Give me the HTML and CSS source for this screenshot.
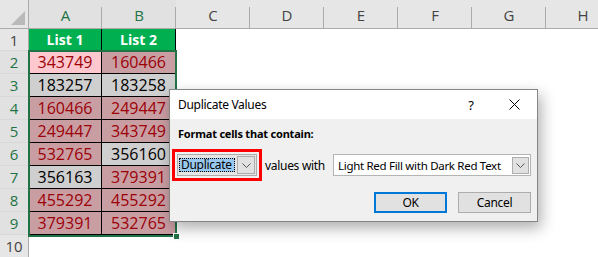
FILE: index.html
```html
<!DOCTYPE html>
<html lang="en">
<head>
    <meta charset="UTF-8">
    <meta name="viewport" content="width=device-width, initial-scale=1.0">
    <title>Duplicate Values</title>
    <link rel="stylesheet" href="styles.css">
</head>
<body>
    <div class="sheet">
        <div class="corner">
            <svg width="16" height="16" viewBox="0 0 16 16"><polygon points="15,1 15,15 1,15" fill="#b9b9b9"/></svg>
        </div>
        <div class="ch sel">A</div>
        <div class="ch sel">B</div>
        <div class="ch">C</div>
        <div class="ch">D</div>
        <div class="ch">E</div>
        <div class="ch">F</div>
        <div class="ch">G</div>
        <div class="ch">H</div>

        <div class="rh">1</div>
        <div class="cell head">List 1</div>
        <div class="cell head">List 2</div>
        <div class="blank"></div><div class="blank"></div><div class="blank"></div>
        <div class="blank"></div><div class="blank"></div><div class="blank"></div>

        <div class="rh sel">2</div>
        <div class="cell active">343749</div>
        <div class="cell dup">160466</div>
        <div class="blank"></div><div class="blank"></div><div class="blank"></div>
        <div class="blank"></div><div class="blank"></div><div class="blank"></div>

        <div class="rh sel">3</div>
        <div class="cell">183257</div>
        <div class="cell">183258</div>
        <div class="blank"></div><div class="blank"></div><div class="blank"></div>
        <div class="blank"></div><div class="blank"></div><div class="blank"></div>

        <div class="rh sel">4</div>
        <div class="cell dup">160466</div>
        <div class="cell dup">249447</div>
        <div class="blank"></div><div class="blank"></div><div class="blank"></div>
        <div class="blank"></div><div class="blank"></div><div class="blank"></div>

        <div class="rh sel">5</div>
        <div class="cell dup">249447</div>
        <div class="cell dup">343749</div>
        <div class="blank"></div><div class="blank"></div><div class="blank"></div>
        <div class="blank"></div><div class="blank"></div><div class="blank"></div>

        <div class="rh sel">6</div>
        <div class="cell dup">532765</div>
        <div class="cell">356160</div>
        <div class="blank"></div><div class="blank"></div><div class="blank"></div>
        <div class="blank"></div><div class="blank"></div><div class="blank"></div>

        <div class="rh sel">7</div>
        <div class="cell">356163</div>
        <div class="cell dup">379391</div>
        <div class="blank"></div><div class="blank"></div><div class="blank"></div>
        <div class="blank"></div><div class="blank"></div><div class="blank"></div>

        <div class="rh sel">8</div>
        <div class="cell dup">455292</div>
        <div class="cell dup">455292</div>
        <div class="blank"></div><div class="blank"></div><div class="blank"></div>
        <div class="blank"></div><div class="blank"></div><div class="blank"></div>

        <div class="rh sel">9</div>
        <div class="cell dup">379391</div>
        <div class="cell dup">532765</div>
        <div class="blank"></div><div class="blank"></div><div class="blank"></div>
        <div class="blank"></div><div class="blank"></div><div class="blank"></div>

        <div class="rh">10</div>
        <div class="blank"></div><div class="blank"></div><div class="blank"></div><div class="blank"></div>
        <div class="blank"></div><div class="blank"></div><div class="blank"></div><div class="blank"></div>
    </div>

    <div class="selection"></div>
    <div class="handle"></div>

    <div class="dialog">
        <div class="titlebar">
            <span class="title">Duplicate Values</span>
            <span class="help">?</span>
            <svg class="close" width="11" height="11" viewBox="0 0 11 11">
                <path d="M0.5 0.5 L10.5 10.5 M10.5 0.5 L0.5 10.5" stroke="#000" stroke-width="1"/>
            </svg>
        </div>
        <div class="dlg-body">
            <div class="prompt">Format cells that contain:</div>
            <div class="rule">
                <div class="focus-box">
                    <div class="combo small">
                        <span class="picked">Duplicate</span>
                        <span class="drop">
                            <svg width="9" height="5" viewBox="0 0 9 5"><path d="M0.5 0.5 L4.5 4.5 L8.5 0.5" fill="none" stroke="#555" stroke-width="1"/></svg>
                        </span>
                    </div>
                </div>
                <span class="with">values with</span>
                <div class="combo wide">
                    <span class="value">Light Red Fill with Dark Red Text</span>
                    <span class="drop">
                        <svg width="9" height="5" viewBox="0 0 9 5"><path d="M0.5 0.5 L4.5 4.5 L8.5 0.5" fill="none" stroke="#555" stroke-width="1"/></svg>
                    </span>
                </div>
            </div>
            <div class="buttons">
                <button class="btn default">OK</button>
                <button class="btn">Cancel</button>
            </div>
        </div>
    </div>
</body>
</html>
```

FILE: styles.css
```css
*{
    box-sizing: border-box;
}
body{
    margin: 0;
    width: 598px;
    height: 257px;
    overflow: hidden;
    position: relative;
    background: #fff;
    font-family: "Open Sans", "Noto Sans", sans-serif;
}

/* worksheet */
.sheet{
    display: grid;
    grid-template-columns: 29px 73px repeat(7, 74px);
    grid-template-rows: 29px 22px repeat(8, 23px) 23px;
}
.corner{
    background: #e6e6e6;
    border-right: 1px solid #ababab;
    border-bottom: 1px solid #ababab;
    display: flex;
    align-items: flex-end;
    justify-content: flex-end;
    padding: 0 2px 2px 0;
}
.ch{
    background: linear-gradient(#ababab, #ababab) right 0 top 7px / 1px 22px no-repeat, #e6e6e6;
    border-bottom: 1px solid #ababab;
    display: flex;
    align-items: center;
    justify-content: center;
    font-size: 15px;
    color: #444;
    padding-top: 2px;
}
.ch.sel{
    background: linear-gradient(#ababab, #ababab) right 0 top 7px / 1px 22px no-repeat, #e1e1e1;
    color: #217346;
}
.rh{
    background: #e6e6e6;
    border-right: 1px solid #ababab;
    border-bottom: 1px solid #d8d8d8;
    display: flex;
    align-items: center;
    justify-content: center;
    font-size: 15px;
    color: #444;
}
.rh.sel{
    background: #e1e1e1;
    color: #217346;
}
.cell{
    border-right: 1px solid #000;
    border-bottom: 1px solid #000;
    background: #cfcfcf;
    color: #000;
    display: flex;
    align-items: center;
    justify-content: center;
    font-size: 16px;
}
.cell.head{
    background: #00b050;
    color: #fff;
    font-weight: bold;
    font-size: 14px;
}
.cell.dup{
    background: #c99ea3;
    color: #9c0006;
}
.cell.active{
    background: #ffc7ce;
    color: #9c0006;
}
.blank{
    background: #fff;
}

/* selection outline on A2:B9 */
.selection{
    position: absolute;
    left: 28px;
    top: 50px;
    width: 149px;
    height: 187px;
    border: 2px solid #217346;
}
.handle{
    position: absolute;
    left: 173px;
    top: 233px;
    width: 7px;
    height: 7px;
    background: #217346;
    border: 1px solid #fff;
}

/* dialog */
.dialog{
    position: absolute;
    left: 169px;
    top: 89px;
    width: 369px;
    height: 133px;
    border: 1px solid #858585;
    background: #f0f0f0;
    box-shadow: 3px 6px 14px rgba(0, 0, 0, 0.32);
    font-family: "Noto Sans", sans-serif;
    font-size: 12px;
    letter-spacing: -0.3px;
    color: #000;
    white-space: nowrap;
}
.titlebar{
    height: 29px;
    background: #fff;
    display: flex;
    align-items: center;
    padding-left: 8px;
}
.title{
    flex: 1;
}
.help{
    width: 10px;
    text-align: center;
    font-size: 13px;
    margin-right: 33px;
}
.close{
    margin-right: 17px;
}
.dlg-body{
    display: flex;
    flex-direction: column;
    padding: 0 6px 0 2px;
}
.prompt{
    margin: 7px 0 0 6px;
    line-height: 16px;
    font-weight: bold;
    font-size: 11px;
    letter-spacing: -0.2px;
}
.rule{
    margin-top: 7px;
    height: 32px;
    display: flex;
    align-items: center;
}
.focus-box{
    width: 90px;
    height: 32px;
    border: 3px solid #f00;
    padding: 2px;
}
.combo{
    height: 22px;
    border: 1px solid #adadad;
    display: flex;
    align-items: center;
}
.combo.small{
    width: 80px;
    background: #e5e5e5;
    padding-left: 1px;
}
.picked{
    width: 56px;
    height: 14px;
    line-height: 12px;
    background: #99c9ef;
    border: 1px dotted #000;
    padding-left: 1px;
}
.drop{
    width: 18px;
    height: 18px;
    margin-left: auto;
    margin-right: 1px;
    background: #e1e1e1;
    border: 1px solid #adadad;
    display: flex;
    align-items: center;
    justify-content: center;
}
.with{
    width: 71px;
    padding-left: 3px;
}
.combo.wide{
    width: 198px;
    background: #fff;
    border-color: #b4b4b4;
    padding-left: 4px;
}
.combo.wide .value{
    font-size: 11.5px;
}
.combo.wide .drop{
    width: 17px;
    height: 17px;
}
.buttons{
    margin-top: 11px;
    display: flex;
    justify-content: flex-end;
    gap: 11px;
}
.btn{
    width: 73px;
    height: 21px;
    padding: 0;
    background: #e1e1e1;
    border: 1px solid #adadad;
    font-family: "Noto Sans", sans-serif;
    font-size: 12px;
    letter-spacing: -0.3px;
    color: #000;
}
.btn.default{
    border: 2px solid #0078d7;
}
```
